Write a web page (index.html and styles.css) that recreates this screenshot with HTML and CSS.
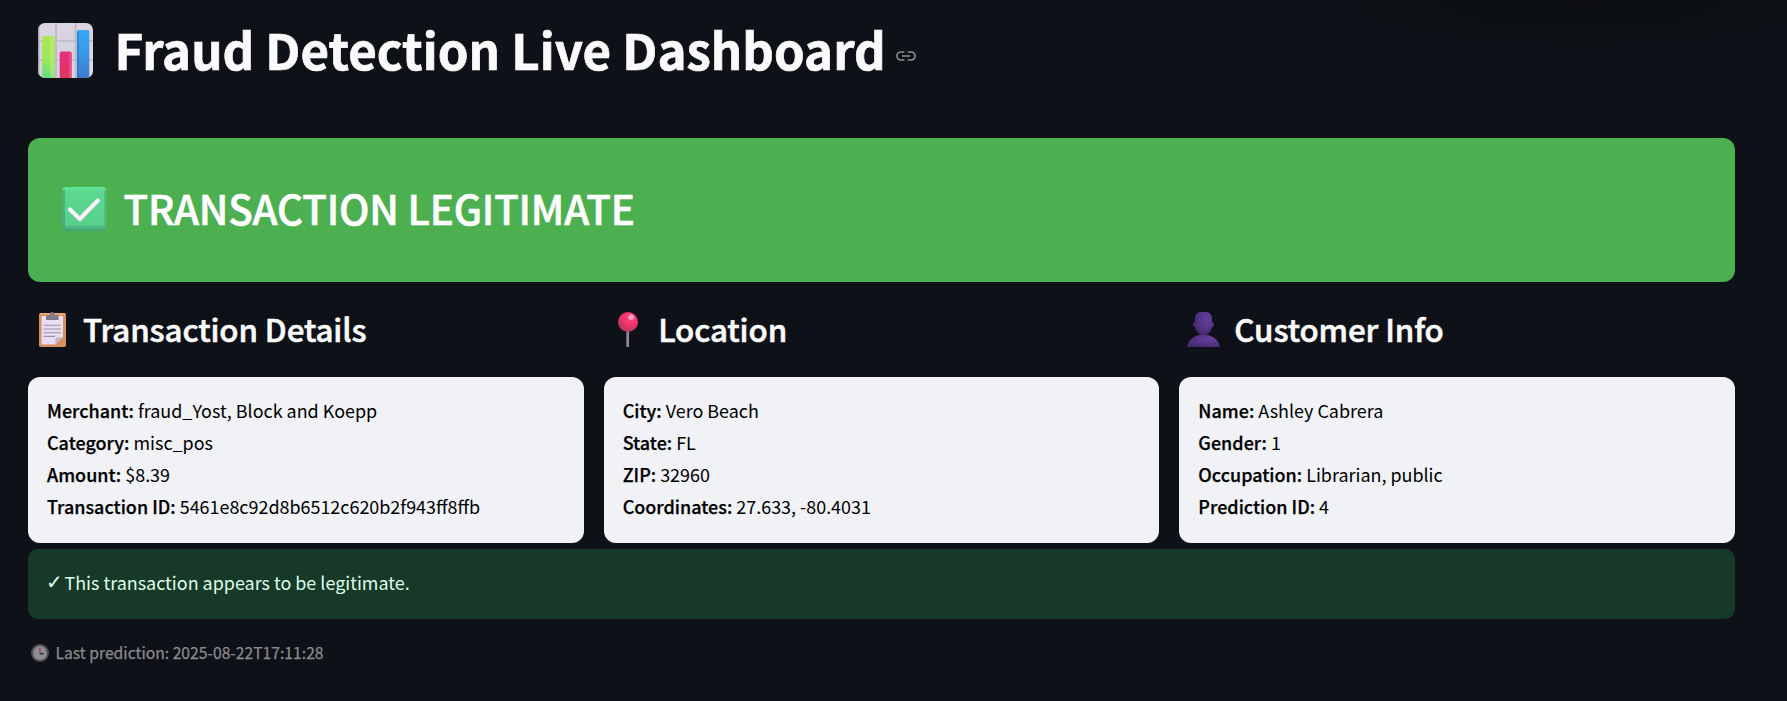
FILE: index.html
```html
<!DOCTYPE html>
<html lang="en">
<head>
<meta charset="utf-8">
<title>Fraud Detection Live Dashboard</title>
<link rel="stylesheet" href="styles.css">
</head>
<body>
<main class="page">
  <header class="title">
    <svg class="title-icon" viewBox="0 0 55 55" aria-hidden="true">
      <defs>
        <linearGradient id="panel" x1="0" y1="0" x2="1" y2="1"><stop offset="0" stop-color="#dcd6e2"/><stop offset=".6" stop-color="#d8d2e0"/><stop offset="1" stop-color="#e6dcec"/></linearGradient>
        <linearGradient id="green" x1="0" y1="0" x2="0" y2="1"><stop offset="0" stop-color="#a9e557"/><stop offset=".5" stop-color="#a0e860"/><stop offset="1" stop-color="#5edb8a"/></linearGradient>
        <linearGradient id="red" x1="0" y1="0" x2="0" y2="1"><stop offset="0" stop-color="#e5307f"/><stop offset="1" stop-color="#e0365f"/></linearGradient>
        <linearGradient id="blue" x1="0" y1="0" x2="0" y2="1"><stop offset="0" stop-color="#38a7f5"/><stop offset=".5" stop-color="#3a98e6"/><stop offset="1" stop-color="#3d78cb"/></linearGradient>
        <clipPath id="round"><rect width="55" height="55" rx="7"/></clipPath>
      </defs>
      <g clip-path="url(#round)">
        <rect width="55" height="55" fill="url(#panel)"/>
        <path d="M18 0v55M37.500 0v55M0 18h55M0 37h55" stroke="#bdb8c3" stroke-width="1.700"/>
        <path d="M.7 0v55" stroke="#aaa5b2" stroke-width="1.400"/>
        <rect x="4" y="13" width="12.500" height="44" rx="1.800" fill="url(#green)"/>
        <rect x="12.500" y="14.500" width="3" height="40" fill="#c4f562" opacity=".55"/>
        <rect x="21.700" y="28.500" width="12" height="30" rx="1.800" fill="url(#red)"/>
        <rect x="31" y="30" width="2" height="26" fill="#fb5a92" opacity=".6"/>
        <rect x="38.800" y="7" width="12.500" height="50" rx="1.800" fill="url(#blue)"/>
        <rect x="39.200" y="9" width="1.600" height="46" fill="#2a68ad" opacity=".5"/>
      </g>
    </svg>
    <h1>Fraud Detection Live Dashboard</h1>
    <svg class="link-icon" viewBox="0 0 20 10" aria-hidden="true"><path d="M8.300 .9H5a4.100 4.100 0 0 0 0 8.200h3.300M11.700 .9H15a4.100 4.100 0 0 1 0 8.200h-3.300M6 5h8" fill="none" stroke="#8f9094" stroke-width="1.500"/></svg>
  </header>

  <section class="banner">
    <svg class="banner-icon" viewBox="0 0 44 44" aria-hidden="true">
      <defs><linearGradient id="tick" x1="0" y1="0" x2="0" y2="1"><stop offset="0" stop-color="#62e496"/><stop offset=".12" stop-color="#5cd991"/><stop offset=".85" stop-color="#58d08c"/><stop offset="1" stop-color="#3f9f73"/></linearGradient></defs>
      <rect width="44" height="44" rx="3.500" fill="url(#tick)"/>
      <path d="M1.500 3v38" stroke="#3c9a70" stroke-width="3" opacity=".6"/>
      <path d="M42.800 3v38" stroke="#45b27c" stroke-width="1.500" opacity=".7"/>
      <path d="M8 22.500L17.800 32L35.800 13.500" fill="none" stroke="#f7effb" stroke-width="4.200" stroke-linecap="round" stroke-linejoin="round"/>
    </svg>
    <h2>TRANSACTION LEGITIMATE</h2>
  </section>

  <div class="columns">
    <section>
      <div class="heading">
        <svg class="clipboard" viewBox="0 0 27 35" aria-hidden="true">
          <rect y="1" width="27" height="34" rx="1.800" fill="#d98f5c"/>
          <path d="M1 1.800h25" stroke="#efab74" stroke-width="1.500"/>
          <path d="M3.500 4h19.500q1 0 1 1v20l-7.500 7.500H3.500q-1 0-1-1V5q0-1 1-1z" fill="#e7dff1"/>
          <path d="M16.500 32.500v-5.500q0-1.500 1.500-1.500h6z" fill="#c2b2d2"/>
          <path d="M7 8V4.500q0-1.500 2-1.500h2q0-3 2.300-3t2.300 3h2q2 0 2 1.500V8z" fill="#827b87"/>
          <path d="M5 13.300h16.500M5 17h16.500M5 20.700h16.500M5 24.400h10.500" stroke="#9c92a8" stroke-width="1.100" stroke-linecap="round"/>
        </svg>
        <h3>Transaction Details</h3>
      </div>
      <div class="card">
        <div><strong>Merchant:</strong> fraud_Yost, Block and Koepp</div>
        <div><strong>Category:</strong> misc_pos</div>
        <div><strong>Amount:</strong> $8.39</div>
        <div><strong>Transaction ID:</strong> 5461e8c92d8b6512c620b2f943ff8ffb</div>
      </div>
    </section>

    <section>
      <div class="heading">
        <svg class="pin" viewBox="0 0 20 35" aria-hidden="true">
          <defs><radialGradient id="ball" cx=".62" cy=".3" r=".75"><stop offset="0" stop-color="#ff4d86"/><stop offset=".5" stop-color="#f5326f"/><stop offset="1" stop-color="#a83a58"/></radialGradient></defs>
          <rect x="8.300" y="18" width="2.700" height="17" rx="1" fill="#9a8ba2"/>
          <path d="M8.700 19v15" stroke="#685d71" stroke-width=".9"/>
          <circle cx="10" cy="10" r="10" fill="url(#ball)"/>
          <circle cx="13.200" cy="5.300" r="2.700" fill="#ffb6cd" opacity=".85"/>
        </svg>
        <h3>Location</h3>
      </div>
      <div class="card">
        <div><strong>City:</strong> Vero Beach</div>
        <div><strong>State:</strong> FL</div>
        <div><strong>ZIP:</strong> 32960</div>
        <div><strong>Coordinates:</strong> 27.633, -80.4031</div>
      </div>
    </section>

    <section>
      <div class="heading">
        <svg class="bust" viewBox="0 0 33 35" aria-hidden="true">
          <defs><radialGradient id="skin" cx=".7" cy=".3" r=".8"><stop offset="0" stop-color="#63409a"/><stop offset=".6" stop-color="#523385"/><stop offset="1" stop-color="#43296a"/></radialGradient></defs>
          <ellipse cx="8" cy="12.500" rx="1.800" ry="2.500" fill="#472c70"/>
          <ellipse cx="25" cy="12.500" rx="1.800" ry="2.500" fill="#55358a"/>
          <path d="M8 6q.5-6 6-6h5q5.500 0 6 6v7.500q0 4.500-3 7.300-2.500 2.200-5.500 2.200t-5.500-2.200q-3-2.800-3-7.300z" fill="url(#skin)"/>
          <path d="M0 35q1.200-8 9.500-11.200 2.500-1 4-1h6q1.500 0 4 1Q31.800 27 33 35z" fill="url(#skin)"/>
        </svg>
        <h3>Customer Info</h3>
      </div>
      <div class="card">
        <div><strong>Name:</strong> Ashley Cabrera</div>
        <div><strong>Gender:</strong> 1</div>
        <div><strong>Occupation:</strong> Librarian, public</div>
        <div><strong>Prediction ID:</strong> 4</div>
      </div>
    </section>
  </div>

  <div class="success"><span class="check">✓</span><span>This transaction appears to be legitimate.</span></div>

  <footer class="caption">
    <svg class="clock" viewBox="0 0 18 18" aria-hidden="true">
      <circle cx="9" cy="9" r="9" fill="#514e56"/>
      <circle cx="9" cy="9" r="6.900" fill="#908c94"/>
      <path d="M9 3.700v5.600" stroke="#a3405f" stroke-width="1.400"/>
      <path d="M8.700 9.700h4.100" stroke="#37344a" stroke-width="1.500"/>
    </svg>
    <span>Last prediction: 2025-08-22T17:11:28</span>
  </footer>
</main>
</body>
</html>
```
FILE: styles.css
```css
* { box-sizing: border-box; }

body {
  margin: 0;
  min-height: 701px;
  background: radial-gradient(ellipse 235px 46px at 1580px 0, #0c0e11 0%, #0d1013 55%, #0e1117 100%) #0e1117;
  color: #fafafa;
  font-family: "Noto Sans CJK SC", "Noto Sans", sans-serif;
  font-size: 17.93px;
  line-height: 32px;
}

h1, h2, h3 { margin: 0; white-space: nowrap; }
svg { display: block; flex: none; }

.page { padding: 15px 52px 0 28px; }

.title { display: flex; align-items: center; height: 67px; margin-bottom: 56px; padding-left: 10px; }
.title-icon { width: 55px; height: 55px; margin: 4px 21.5px 0 0; }
.title h1 { font-size: 49.2px; font-weight: 700; line-height: 67px; -webkit-text-stroke: 0.7px #fafafa; }
.link-icon { width: 20px; height: 10px; margin: 15px 0 0 10px; }

.banner { display: flex; align-items: center; height: 144px; padding: 0 34px 5px; border-radius: 12px; background: #4caf50; color: #fff; }
.banner-icon { width: 44px; height: 44px; margin: 3px 17.5px 0 0; }
.banner h2 { font-size: 40.3px; font-weight: 500; line-height: 54px; letter-spacing: -0.17px; -webkit-text-stroke: 0.6px #fff; }

.columns { display: grid; grid-template-columns: repeat(3, 1fr); gap: 20px; }
.heading { display: flex; align-items: center; height: 95px; padding: 0 0 2px 11px; }
.heading svg { margin-top: 2px; height: 35px; }
.heading h3 { font-size: 31.3px; font-weight: 500; line-height: 42px; letter-spacing: -0.1px; -webkit-text-stroke: 0.6px #fafafa; }
.heading .clipboard { width: 27px; margin-right: 17px; }
.heading .pin { width: 20px; margin: 2px 20.5px 0 3px; }
.heading .bust { width: 33px; margin: 2px 14px 0 -3px; }

.card { height: 166px; padding: 17px 19px 21px; border-radius: 12px; background: #f0f2f6; color: #000; }
.card strong { font-weight: 500; letter-spacing: 0.03px; -webkit-text-stroke: 0.25px #000; }

.success { display: flex; align-items: center; height: 70px; margin-top: 6px; padding: 0 19px 4px; border-radius: 10px; background: #173928; color: #dffde9; }
.check { width: 17.5px; font-family: "DejaVu Sans", sans-serif; font-size: 20px; text-indent: -1px; }

.caption { display: flex; align-items: center; height: 24px; margin-top: 22px; padding-left: 3px; color: #8b8c90; font-size: 15.7px; line-height: 24px; -webkit-text-stroke: 0.25px #8b8c90; }
.clock { width: 18px; height: 18px; margin: 0 6.5px 0 0; }
```
